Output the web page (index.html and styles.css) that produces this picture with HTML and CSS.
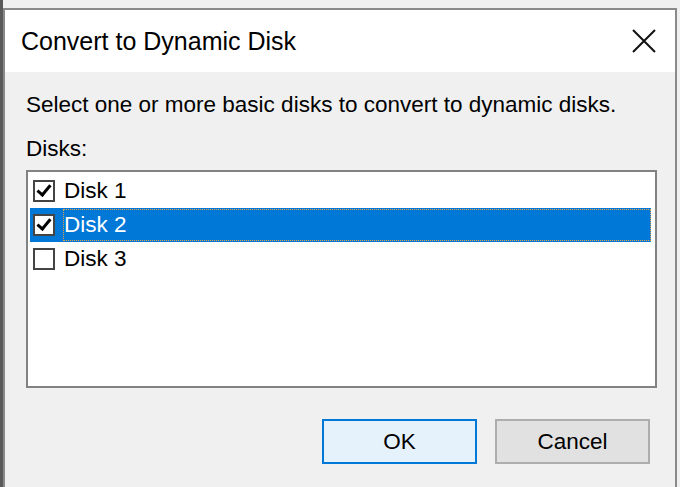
FILE: index.html
```html
<!DOCTYPE html>
<html lang="en">

<head>
  <meta charset="UTF-8">
  <meta name="viewport" content="width=device-width, initial-scale=1.0">
  <title>Convert to Dynamic Disk</title>
  <link rel="stylesheet" href="styles.css">
</head>

<body>
  <div id="dialog">
    <div id="dialog-titlebar">
      <span id="dialog-title">Convert to Dynamic Disk</span>
      <svg id="close-btn" width="26" height="26" viewBox="0 0 26 26">
        <path d="M2 2 L24 24 M24 2 L2 24" stroke="#111" stroke-width="2" fill="none" />
      </svg>
    </div>

    <div id="dialog-body">
      <p class="prompt">Select one or more basic disks to convert to dynamic disks.</p>
      <p class="label">Disks:</p>

      <ul id="disk-list">
        <li class="disk">
          <span class="check checked"></span>
          <span class="disk-name">Disk 1</span>
        </li>
        <li class="disk selected">
          <span class="check checked"></span>
          <span class="disk-name">Disk 2</span>
        </li>
        <li class="disk">
          <span class="check"></span>
          <span class="disk-name">Disk 3</span>
        </li>
      </ul>

      <div id="dialog-buttons">
        <button class="btn btn-default">OK</button>
        <button class="btn">Cancel</button>
      </div>
    </div>
  </div>
</body>

</html>
```

FILE: styles.css
```css
body {
  margin: 0;
  height: 100vh;
  overflow: hidden;
  background-color: #f0f0f0;
  border-left: 3px solid #5a5a5a;
  font-family: 'Liberation Sans', Arial, sans-serif;
  color: #000;
}

#dialog {
  margin: 8px 3px 0 0;
  height: calc(100vh - 8px);
  border: 2px solid #8a8a8a;
  border-bottom: none;
  background-color: #f0f0f0;
  display: flex;
  flex-direction: column;
}

#dialog-titlebar {
  height: 62px;
  background-color: #fff;
  display: flex;
  align-items: center;
  justify-content: space-between;
  padding: 0 18px 0 16px;
}

#dialog-title {
  font-size: 25px;
}

#dialog-body {
  padding: 18px 18px 0 21px;
}

.prompt,
.label {
  margin: 0;
  font-size: 22.5px;
  line-height: 30px;
}

.label {
  margin-top: 14px;
  margin-bottom: 6px;
}

#disk-list {
  list-style: none;
  margin: 0;
  padding: 2px 4px 2px 2px;
  height: 210px;
  background-color: #fff;
  border: 2px solid #828282;
}

.disk {
  height: 34px;
  display: flex;
  align-items: center;
}

.check {
  width: 18px;
  height: 18px;
  margin: 0 8px 0 3px;
  border: 2px solid #444;
  background-color: #fff;
  position: relative;
}

.check.checked::after {
  content: "";
  position: absolute;
  left: 5px;
  top: 0;
  width: 5px;
  height: 11px;
  border: solid #000;
  border-width: 0 3px 3px 0;
  transform: rotate(40deg);
}

.disk-name {
  flex: 1;
  font-size: 22.5px;
  padding: 2px 0;
  border: 1px solid transparent;
}

.disk.selected {
  background-color: #0078d7;
  color: #fff;
}

.disk.selected .disk-name {
  border: 1px dotted #e6a24a;
}

#dialog-buttons {
  display: flex;
  justify-content: flex-end;
  gap: 18px;
  margin-top: 31px;
  padding-right: 7px;
}

.btn {
  width: 155px;
  height: 45px;
  font-family: 'Liberation Sans', Arial, sans-serif;
  font-size: 22.5px;
  color: #000;
  background-color: #e1e1e1;
  border: 2px solid #adadad;
}

.btn-default {
  background-color: #e5f1fb;
  border-color: #0078d7;
}
```
